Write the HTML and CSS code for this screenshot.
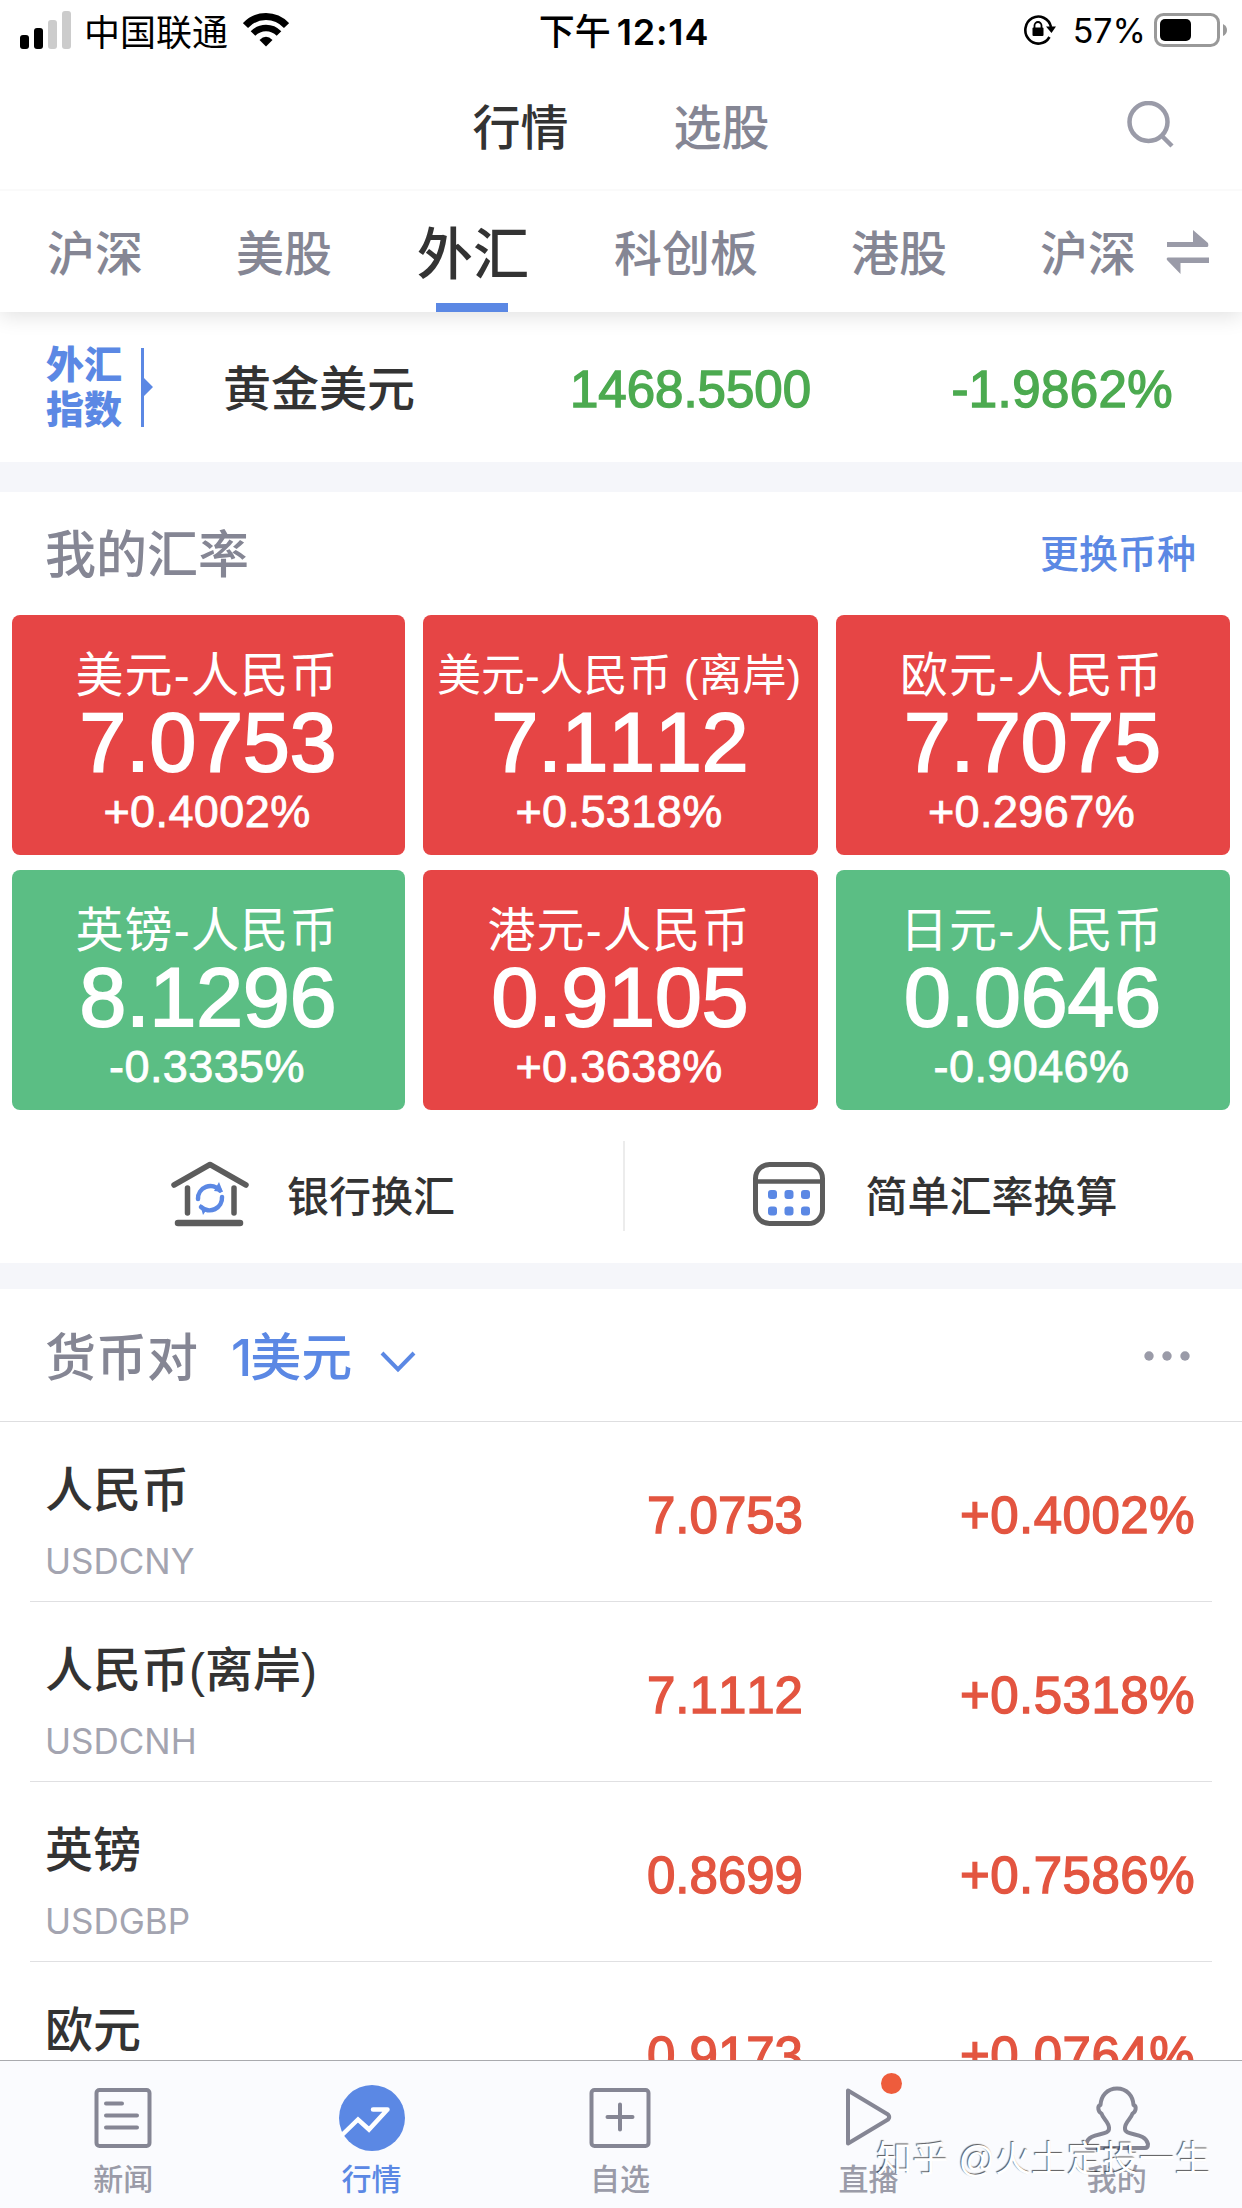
FILE: index.html
```
<!DOCTYPE html>
<html lang="zh-CN">

<head>
    <meta charset="UTF-8">
    <meta name="viewport" content="width=device-width, initial-scale=1.0">
    <title>行情 - 外汇</title>
    <link rel="stylesheet" href="styles.css">
</head>

<body>
    <div class="status-bar">
        <div class="status-left">
            <svg class="signal" width="52" height="38" viewBox="0 0 52 38">
                <rect x="0" y="24" width="9" height="14" rx="3" fill="#000"/>
                <rect x="14" y="17" width="9" height="21" rx="3" fill="#000"/>
                <rect x="28" y="9" width="9" height="29" rx="3" fill="#ccc"/>
                <rect x="42" y="0" width="9" height="38" rx="3" fill="#ccc"/>
            </svg>
            <span class="carrier">中国联通</span>
            <svg width="46" height="34" viewBox="0 0 46 34">
                <path d="M2.5 12.5Q11 3.5 23 3.5T43.5 12.5" fill="none" stroke="#000" stroke-width="7"/>
                <path d="M10 20.5Q15.500 15 23 15T36 20.500" fill="none" stroke="#000" stroke-width="6.500"/>
                <path d="M16.500 27Q23 20.500 29.500 27L23 33.500Z"/>
            </svg>
        </div>
        <div class="status-time">下午<b>12:14</b></div>
        <div class="status-right">
            <svg width="34" height="32" viewBox="0 0 34 32">
                <path d="M26.500 23A13 13.500 0 1 1 28 13" fill="none" stroke="#000" stroke-width="2.600"/>
                <path d="M23 12.500H33L28.500 19Z"/>
                <rect x="9.500" y="13.500" width="11" height="8.500" rx="1"/>
                <path d="M11.500 14V11.500a3.500 3.500 0 0 1 7 0V14" fill="none" stroke="#000" stroke-width="1.800"/>
            </svg>
            <span class="percent">57%</span>
            <svg width="74" height="40" viewBox="0 0 74 40">
                <rect x="1.500" y="4.500" width="63" height="31" rx="8" fill="none" stroke="#999" stroke-width="3"/>
                <rect x="6" y="9" width="31" height="22" rx="5"/>
                <path d="M69 14v12q4-2 4-6t-4-6z" fill="#999"/>
            </svg>
        </div>
    </div>

    <div class="nav">
        <span class="nav-item active">行情</span>
        <span class="nav-item">选股</span>
        <svg class="search" width="48" height="48" viewBox="0 0 48 48">
            <circle cx="21.500" cy="21" r="19" fill="none" stroke="#9a9ba8" stroke-width="4.500"/>
            <path d="M34 34L45 45" stroke="#9a9ba8" stroke-width="4.500"/>
        </svg>
    </div>

    <div class="tabs">
        <span class="tab">沪深</span>
        <span class="tab">美股</span>
        <span class="tab active"><i>外汇</i></span>
        <span class="tab">科创板</span>
        <span class="tab">港股</span>
        <span class="tab">沪深</span>
        <svg class="swap" width="44" height="44" viewBox="0 0 44 44">
            <path d="M1 12H27V0L42 13Q43 17 41 17H1Z" fill="#9a9ba8"/>
            <path d="M43 27.500H2Q0 28 1 30L14.500 44V33H43Z" fill="#9a9ba8"/>
        </svg>
    </div>

    <div class="content">
        <div class="index-row">
            <div class="index-label">外汇<br>指数</div>
            <svg class="index-mark" width="12" height="79" viewBox="0 0 12 79">
                <path d="M0 0H3V30L12 39L3 48V79H0Z" fill="#5b88e4"/>
            </svg>
            <span class="index-name">黄金美元</span>
            <span class="index-price">1468.5500</span>
            <span class="index-change">-1.9862%</span>
        </div>

        <div class="section rates">
            <div class="section-head">
                <span class="title">我的汇率</span>
                <span class="link">更换币种</span>
            </div>
            <div class="rate-grid">
                <div class="rate-card up">
                    <div class="rate-name">美元-人民币</div>
                    <div class="rate-value">7.0753</div>
                    <div class="rate-change">+0.4002%</div>
                </div>
                <div class="rate-card up">
                    <div class="rate-name small">美元-人民币 (离岸)</div>
                    <div class="rate-value">7.1112</div>
                    <div class="rate-change">+0.5318%</div>
                </div>
                <div class="rate-card up">
                    <div class="rate-name">欧元-人民币</div>
                    <div class="rate-value">7.7075</div>
                    <div class="rate-change">+0.2967%</div>
                </div>
                <div class="rate-card down">
                    <div class="rate-name">英镑-人民币</div>
                    <div class="rate-value">8.1296</div>
                    <div class="rate-change">-0.3335%</div>
                </div>
                <div class="rate-card up">
                    <div class="rate-name">港元-人民币</div>
                    <div class="rate-value">0.9105</div>
                    <div class="rate-change">+0.3638%</div>
                </div>
                <div class="rate-card down">
                    <div class="rate-name">日元-人民币</div>
                    <div class="rate-value">0.0646</div>
                    <div class="rate-change">-0.9046%</div>
                </div>
            </div>
            <div class="tools">
                <div class="tool">
                    <svg width="78" height="66" viewBox="0 0 78 66">
                        <g fill="none" stroke="#5c5c5c" stroke-width="5.500" stroke-linecap="round" stroke-linejoin="round">
                            <path d="M3 24L39 3.500L75 24"/>
                            <path d="M16.500 27V52M63 27V52"/>
                            <path d="M7 62H69" stroke-width="6.500"/>
                        </g>
                        <g fill="none" stroke="#5b88e4" stroke-width="4.500" stroke-linecap="round">
                            <path d="M27 38A12.500 12.500 0 0 1 49 29.500"/>
                            <path d="M51 36A12.500 12.500 0 0 1 30 46"/>
                        </g>
                        <path d="M48 21L52 31L43 30ZM29 43L36 48L32 54Z" fill="#5b88e4"/>
                    </svg>
                    <span>银行换汇</span>
                </div>
                <div class="tool">
                    <svg width="72" height="64" viewBox="0 0 72 64">
                        <rect x="2.500" y="2.500" width="67" height="59" rx="14" fill="none" stroke="#5c5c5c" stroke-width="5"/>
                        <path d="M3 19.500H69" stroke="#5c5c5c" stroke-width="4.500"/>
                        <g fill="#5b88e4">
                            <rect x="15" y="28" width="9" height="9" rx="3"/>
                            <rect x="31.500" y="28" width="9" height="9" rx="3"/>
                            <rect x="48" y="28" width="9" height="9" rx="3"/>
                            <rect x="15" y="44.500" width="9" height="9" rx="3"/>
                            <rect x="31.500" y="44.500" width="9" height="9" rx="3"/>
                            <rect x="48" y="44.500" width="9" height="9" rx="3"/>
                        </g>
                    </svg>
                    <span>简单汇率换算</span>
                </div>
            </div>
        </div>

        <div class="section pairs">
            <div class="pairs-head">
                <span class="title">货币对</span>
                <span class="base">1美元</span>
                <svg class="chevron" width="36" height="24" viewBox="0 0 36 24">
                    <path d="M2 3L18 19.500L34 3" fill="none" stroke="#5b88e4" stroke-width="4"/>
                </svg>
                <svg class="more" width="46" height="10" viewBox="0 0 46 10">
                    <g fill="#9a9ba8">
                        <circle cx="5" cy="5" r="4.700"/>
                        <circle cx="23" cy="5" r="4.700"/>
                        <circle cx="41" cy="5" r="4.700"/>
                    </g>
                </svg>
            </div>
            <div class="pair">
                <div class="pair-info">
                    <div class="pair-name">人民币</div>
                    <div class="pair-code">USDCNY</div>
                </div>
                <span class="pair-value">7.0753</span>
                <span class="pair-change">+0.4002%</span>
            </div>
            <div class="pair">
                <div class="pair-info">
                    <div class="pair-name">人民币(离岸)</div>
                    <div class="pair-code">USDCNH</div>
                </div>
                <span class="pair-value">7.1112</span>
                <span class="pair-change">+0.5318%</span>
            </div>
            <div class="pair">
                <div class="pair-info">
                    <div class="pair-name">英镑</div>
                    <div class="pair-code">USDGBP</div>
                </div>
                <span class="pair-value">0.8699</span>
                <span class="pair-change">+0.7586%</span>
            </div>
            <div class="pair">
                <div class="pair-info">
                    <div class="pair-name">欧元</div>
                </div>
                <span class="pair-value">0.9173</span>
                <span class="pair-change">+0.0764%</span>
            </div>
        </div>
    </div>

    <div class="tab-bar">
        <div class="bar-item">
            <svg width="68" height="68" viewBox="0 0 68 68">
                <g fill="none" stroke="#858694" stroke-width="4" stroke-linecap="round">
                    <rect x="7.500" y="5" width="53" height="56" rx="3"/>
                    <path d="M17 18.500H33M17 30.500H48M17 42.500H48"/>
                </g>
            </svg>
            <span>新闻</span>
        </div>
        <div class="bar-item active">
            <svg width="68" height="68" viewBox="0 0 68 68">
                <circle cx="34" cy="33" r="33" fill="#5b88e4"/>
                <path d="M4 50L20 34.500L31 44.500L49 25M35 24.500H49.500" fill="none" stroke="#fff" stroke-width="4.500" stroke-linecap="round"/>
            </svg>
            <span>行情</span>
        </div>
        <div class="bar-item">
            <svg width="68" height="68" viewBox="0 0 68 68">
                <g fill="none" stroke="#858694" stroke-width="4" stroke-linecap="round">
                    <rect x="5.500" y="5" width="57" height="56" rx="3"/>
                    <path d="M21.500 32H46.500M34 19.500V44.500"/>
                </g>
            </svg>
            <span>自选</span>
        </div>
        <div class="bar-item">
            <svg width="68" height="68" viewBox="0 0 68 68">
                <path d="M14 5.500V58.500L54 34.500Q56.500 32 54 29.500Z" fill="none" stroke="#858694" stroke-width="4" stroke-linejoin="round"/>
            </svg>
            <span>直播</span>
            <i class="dot"></i>
        </div>
        <div class="bar-item">
            <svg width="68" height="68" viewBox="0 0 68 68">
                <path d="M34 3.500C24 3.500 18 11 17.500 20C14 21 15 27 18.500 28.500C20 34 26 37 26 43C27 52 6 46 3 59Q3 63 6 63H62Q65 63 65 59C62 46 41 52 42 43C42 37 48 34 49.500 28.500C53 27 54 21 50.500 20C50 11 44 3.500 34 3.500Z" fill="none" stroke="#858694" stroke-width="4" stroke-linejoin="round"/>
            </svg>
            <span>我的</span>
        </div>
        <div class="watermark">知乎 @火土定投一生</div>
    </div>
</body>

</html>
```
FILE: styles.css
```
* {
    box-sizing: border-box;
}

body {
    margin: 0;
    width: 1242px;
    height: 2208px;
    overflow: hidden;
    display: flex;
    flex-direction: column;
    background-color: #fff;
    color: #333;
    font-family: "Liberation Sans", "Noto Sans CJK SC", sans-serif;
    font-kerning: none;
}

svg {
    display: block;
    flex-shrink: 0;
}

i {
    font-style: normal;
}

/* Status bar */
.status-bar {
    height: 64px;
    display: grid;
    grid-template-columns: 1fr auto 1fr;
    align-items: center;
    padding: 0 14px 4px 20px;
    color: #000;
    font-family: Inter, "Noto Sans CJK SC", sans-serif;
    font-size: 34px;
}

.status-left,
.status-right {
    display: flex;
    align-items: center;
}

.status-right {
    justify-content: flex-end;
}

.carrier {
    font-size: 36px;
    margin: 0 15px 0 12px;
    padding-bottom: 1px;
}

.status-time {
    padding-bottom: 2px;
    font-size: 36px;
    font-weight: 500;
}

.status-time b {
    font-weight: 600;
    margin-left: 6px;
    letter-spacing: 0.8px;
}

.percent {
    margin: 0 8px 0 16px;
}

/* Navigation */
.nav {
    height: 127px;
    display: flex;
    align-items: center;
    justify-content: center;
    gap: 105px;
    position: relative;
    padding-bottom: 6px;
    border-bottom: 2px solid #fafafa;
    color: #858694;
    font-size: 48px;
    font-weight: 500;
}

.nav .active {
    color: #333;
}

.search {
    position: absolute;
    right: 67px;
    top: 37px;
}

.tabs {
    height: 121px;
    display: flex;
    align-items: center;
    gap: 93px;
    padding-left: 47px;
    position: relative;
    z-index: 1;
    background-color: #fff;
    box-shadow: 0 4px 20px rgba(0, 0, 0, 0.12);
    clip-path: inset(0 0 -40px 0);
    color: #858694;
    font-size: 48px;
    font-weight: 500;
    white-space: nowrap;
}

.tab {
    height: 121px;
    line-height: 127px;
}

.tab.active {
    color: #333;
    position: relative;
}

.tab.active i {
    display: block;
    transform: scale(1.17);
}

.tab.active::after {
    content: "";
    position: absolute;
    left: 11px;
    bottom: 0;
    width: 72px;
    height: 9px;
    background-color: #5b88e4;
}

.swap {
    margin-left: -63px;
}

.content {
    flex: 1;
    overflow: hidden;
}

/* Gold index */
.index-row {
    height: 150px;
    display: flex;
    align-items: center;
    padding-left: 46px;
    font-size: 51px;
}

.index-label {
    width: 95px;
    padding-top: 2px;
    color: #5b88e4;
    font-size: 38px;
    font-weight: 900;
    line-height: 45px;
}

.index-name {
    width: 346px;
    padding: 0 0 4px 70px;
    font-size: 48px;
    font-weight: 500;
}

.index-price,
.index-change {
    padding-top: 4px;
    color: #4caa50;
    -webkit-text-stroke: 1.4px #4caa50;
}

.index-price {
    width: 311px;
    padding-left: 71px;
}

.index-change {
    flex: 1;
    padding-right: 69px;
    text-align: right;
    letter-spacing: 0.4px;
}

.section {
    border-top: 30px solid #f5f6fa;
}

.section-head {
    height: 123px;
    display: flex;
    align-items: center;
    justify-content: space-between;
    padding: 0 46px 6px 45px;
}

.title {
    color: #858694;
    font-size: 51px;
    font-weight: 500;
}

.link {
    color: #5b88e4;
    font-size: 39px;
    font-weight: 500;
}

.rate-grid {
    display: grid;
    grid-template-columns: 393px 395px 394px;
    gap: 15px 18px;
    padding: 0 12px;
}

.rate-card {
    height: 240px;
    padding: 31px 3px 0 0;
    border-radius: 8px;
    color: #fff;
    text-align: center;
    white-space: nowrap;
}

.up {
    background-color: #e64545;
}

.down {
    background-color: #5bbe84;
}

.rate-name {
    height: 59px;
    font-size: 48px;
    font-weight: 400;
    line-height: 60px;
    letter-spacing: 1.2px;
}

.rate-name.small {
    font-size: 44px;
    letter-spacing: 0;
}

.rate-value {
    height: 76px;
    padding-left: 2px;
    font-size: 84px;
    line-height: 75px;
    -webkit-text-stroke: 2px #fff;
}

.rate-change {
    height: 62px;
    font-size: 45px;
    line-height: 62px;
    letter-spacing: 0.4px;
    -webkit-text-stroke: 0.8px #fff;
}

.tools {
    height: 153px;
    display: flex;
    padding: 31px 0 32px;
}

.tool {
    width: 623px;
    display: flex;
    align-items: center;
    justify-content: center;
    gap: 38px;
    padding: 14px 0 0 3px;
    font-size: 42px;
    font-weight: 500;
}

.tool svg {
    position: relative;
    top: 1px;
}

.tool + .tool {
    width: 619px;
    padding-left: 4px;
    gap: 40px;
    border-left: 2px solid #ececec;
}

/* Currency pairs */
.pairs {
    border-top-width: 26px;
}

.pairs-head {
    height: 133px;
    display: flex;
    align-items: center;
    padding: 0 52px 2px 45px;
    border-bottom: 1px solid #dedee0;
}

.base {
    margin-left: 33px;
    color: #5b88e4;
    font-size: 51px;
    font-weight: 500;
}

.base::first-letter {
    font-family: Inter, sans-serif;
    letter-spacing: -2px;
}

.chevron {
    margin: 15px 0 0 28px;
}

.more {
    margin: 4px 0 0 auto;
}

.pair {
    height: 180px;
    display: flex;
    margin: 0 30px;
    padding: 34px 17px 0 15px;
    border-bottom: 1px solid #e0e0e2;
}

.pair-info {
    width: 602px;
}

.pair-name {
    font-size: 48px;
    font-weight: 500;
    line-height: 70px;
}

.pair-code {
    color: #a3a4b0;
    font-family: Inter, sans-serif;
    font-size: 35px;
    line-height: 70px;
}

.pair-value,
.pair-change {
    color: #e35540;
    font-size: 51px;
    line-height: 119px;
    -webkit-text-stroke: 1.4px #e35540;
}

.pair-change {
    margin-left: auto;
    letter-spacing: 0.5px;
}

/* Bottom tab bar */
.tab-bar {
    height: 148px;
    display: flex;
    position: relative;
    border-top: 1px solid #a9aaae;
    background-color: #fafbfe;
}

.bar-item {
    flex: 1;
    display: flex;
    flex-direction: column;
    align-items: center;
    padding: 24px 2px 0 0;
    position: relative;
    color: #9a9ba8;
    font-size: 30px;
    font-weight: 500;
    line-height: 53px;
}

.bar-item.active {
    color: #5b88e4;
}

.dot {
    position: absolute;
    left: 136px;
    top: 12px;
    width: 21px;
    height: 21px;
    border-radius: 50%;
    background-color: #ee5c3c;
}

.watermark {
    position: absolute;
    right: 31px;
    top: 75px;
    color: #fff;
    font-size: 36px;
    line-height: 48px;
    text-shadow: -1px -1px 1px rgba(0, 0, 0, 0.65);
}
```
